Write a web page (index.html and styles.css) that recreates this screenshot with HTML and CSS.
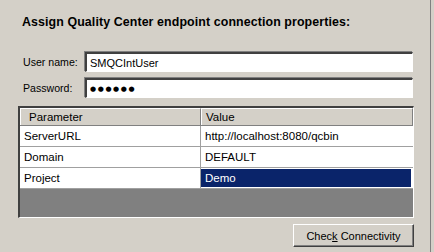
FILE: index.html
```html
<!DOCTYPE html>
<html lang="en">
  <head>
    <meta charset="UTF-8" />
    <title>Connection properties</title>
    <link rel="stylesheet" href="styles.css">
  </head>
  <body>
    <div class="panel">
      <h1 class="title">Assign Quality Center endpoint connection properties:</h1>
      <div class="fields">
        <label class="field">
          <span class="label">User name:</span>
          <input class="box" type="text" value="SMQCIntUser" />
        </label>
        <label class="field">
          <span class="label">Password:</span>
          <input class="box dots" type="text" value="●●●●●●" />
        </label>
      </div>
      <div class="grid">
        <div class="row head">
          <div class="cell">Parameter</div>
          <div class="cell">Value</div>
        </div>
        <div class="row">
          <div class="cell">ServerURL</div>
          <div class="cell">http://localhost:8080/qcbin</div>
        </div>
        <div class="row">
          <div class="cell">Domain</div>
          <div class="cell">DEFAULT</div>
        </div>
        <div class="row">
          <div class="cell">Project</div>
          <div class="cell selected">Demo</div>
        </div>
      </div>
      <div class="actions">
        <button class="btn" type="button">Chec<u>k</u> Connectivity</button>
      </div>
    </div>
  </body>
</html>
```

FILE: styles.css
```css
* {
  box-sizing: border-box;
}
body {
  margin: 0;
  background: #d4d0c8;
  font-family: "Liberation Sans", Arial, sans-serif;
  font-size: 11px;
  color: #000;
}
.panel {
  width: 431px;
  height: 252px;
  border-right: 1px solid #808080;
  padding: 14px 0 0 18px;
}
.title {
  margin: 0 0 0 4px;
  font-size: 12.4px;
  font-weight: bold;
  line-height: 16px;
  letter-spacing: 0.1px;
}
.fields {
  margin-top: 22px;
  display: flex;
  flex-direction: column;
  gap: 6px;
}
.field {
  display: flex;
  align-items: center;
}
.label {
  width: 67px;
  padding-left: 5px;
  font-size: 10.6px;
}
.box {
  width: 328px;
  height: 20px;
  margin: 0;
  padding: 0 0 0 3px;
  font-family: "Liberation Sans", Arial, sans-serif;
  font-size: 11px;
  background: #fff;
  border-top: 2px solid #404040;
  border-left: 2px solid #404040;
  border-right: 1px solid #ffffff;
  border-bottom: 1px solid #ffffff;
  box-shadow: -1px -1px 0 #808080, 1px 1px 0 #d4d0c8;
  outline: none;
}
.box.dots {
  font-family: "DejaVu Sans", sans-serif;
  font-size: 7px;
  letter-spacing: 1.6px;
}
/* table with grey empty area below the rows */
.grid {
  margin-top: 8px;
  width: 396px;
  height: 112px;
  background: #808080;
  border-top: 2px solid #404040;
  border-left: 2px solid #404040;
  border-right: 1px solid #ffffff;
  border-bottom: 1px solid #ffffff;
}
.row {
  display: grid;
  grid-template-columns: 181px 1fr;
  height: 21px;
  background: #fff;
  border-bottom: 1px solid #a0a0a0;
}
.row.head {
  height: 18px;
  background: #d4d0c8;
  border-bottom: 1px solid #808080;
}
.cell {
  padding: 4px 0 0 4px;
  font-size: 11.5px;
  border-right: 1px solid #a0a0a0;
}
.row .cell:last-child {
  border-right: none;
}
.head .cell {
  padding: 2px 0 0 8px;
  border-top: 1px solid #fff;
  border-left: 1px solid #fff;
  border-right: 1px solid #808080;
}
.head .cell:last-child {
  border-right: 1px solid #808080;
  padding-left: 4px;
}
.cell.selected {
  background: #0a246a;
  color: #fff;
  margin: 1px 2px 1px 0;
  padding-top: 3px;
}
.actions {
  display: flex;
  justify-content: flex-end;
  margin-top: 6px;
  padding-right: 16px;
}
.btn {
  width: 121px;
  height: 23px;
  padding: 0;
  font-family: "Liberation Sans", Arial, sans-serif;
  font-size: 11px;
  color: #000;
  background: #d4d0c8;
  border-top: 1px solid #fff;
  border-left: 1px solid #fff;
  border-right: 1px solid #404040;
  border-bottom: 1px solid #404040;
  box-shadow: inset -1px -1px 0 #808080;
}
```
